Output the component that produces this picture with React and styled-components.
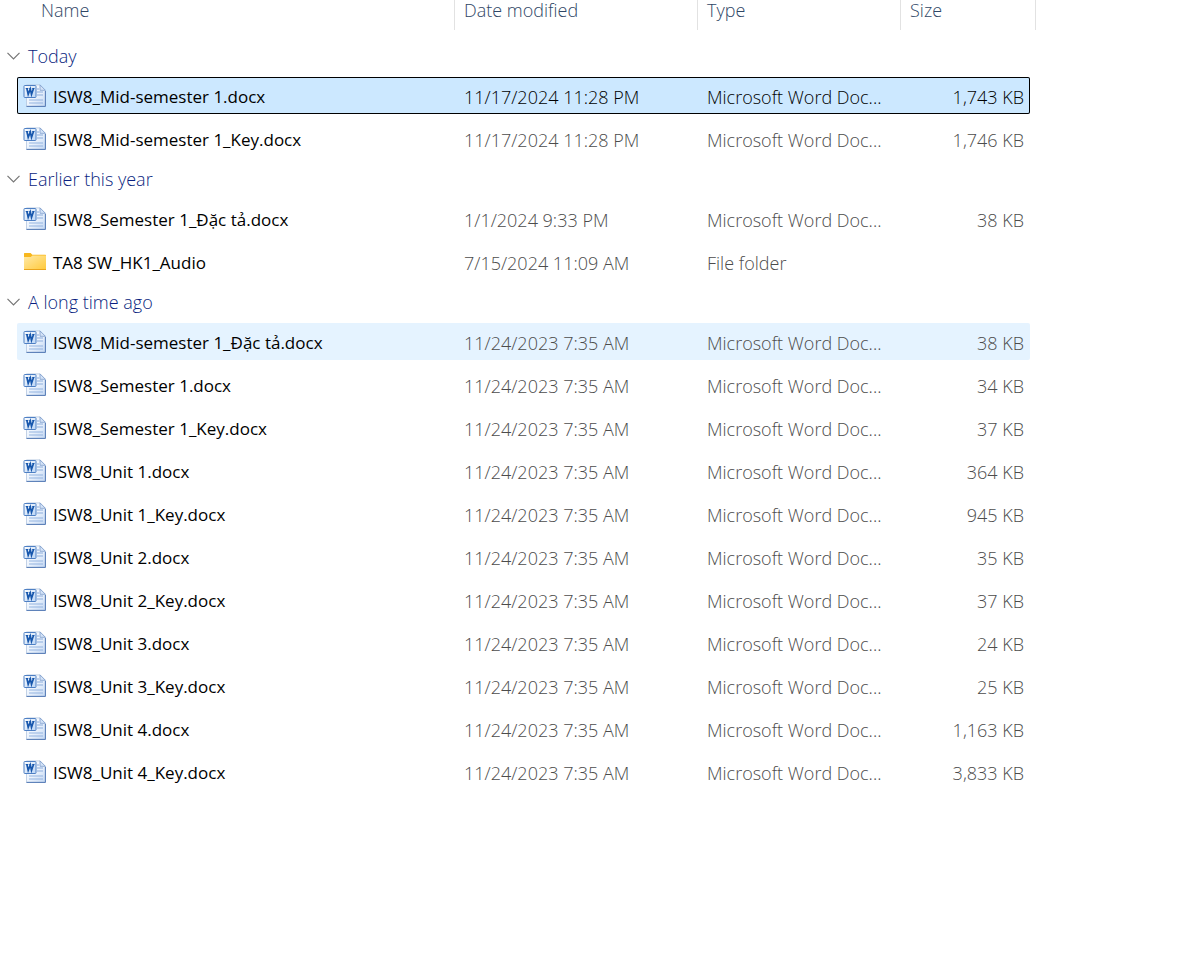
import React from "react";
import styled, { createGlobalStyle, css } from "styled-components";

const GlobalStyle = createGlobalStyle`
  * {
    box-sizing: border-box;
  }
  body {
    margin: 0;
    background: #fff;
    color: #000;
    font-family: "Open Sans", "Noto Sans", sans-serif;
    font-size: 18px;
    font-weight: 300;
    line-height: 24px;
  }
`;

const groups = [
  {
    title: "Today",
    files: [
      { name: "ISW8_Mid-semester 1.docx", date: "11/17/2024 11:28 PM", size: "1,743 KB", state: "selected" },
      { name: "ISW8_Mid-semester 1_Key.docx", date: "11/17/2024 11:28 PM", size: "1,746 KB" },
    ],
  },
  {
    title: "Earlier this year",
    files: [
      { name: "ISW8_Semester 1_Đặc tả.docx", date: "1/1/2024 9:33 PM", size: "38 KB" },
      { name: "TA8 SW_HK1_Audio", date: "7/15/2024 11:09 AM", size: "", folder: true },
    ],
  },
  {
    title: "A long time ago",
    files: [
      { name: "ISW8_Mid-semester 1_Đặc tả.docx", date: "11/24/2023 7:35 AM", size: "38 KB", state: "hovered" },
      { name: "ISW8_Semester 1.docx", date: "11/24/2023 7:35 AM", size: "34 KB" },
      { name: "ISW8_Semester 1_Key.docx", date: "11/24/2023 7:35 AM", size: "37 KB" },
      { name: "ISW8_Unit 1.docx", date: "11/24/2023 7:35 AM", size: "364 KB" },
      { name: "ISW8_Unit 1_Key.docx", date: "11/24/2023 7:35 AM", size: "945 KB" },
      { name: "ISW8_Unit 2.docx", date: "11/24/2023 7:35 AM", size: "35 KB" },
      { name: "ISW8_Unit 2_Key.docx", date: "11/24/2023 7:35 AM", size: "37 KB" },
      { name: "ISW8_Unit 3.docx", date: "11/24/2023 7:35 AM", size: "24 KB" },
      { name: "ISW8_Unit 3_Key.docx", date: "11/24/2023 7:35 AM", size: "25 KB" },
      { name: "ISW8_Unit 4.docx", date: "11/24/2023 7:35 AM", size: "1,163 KB" },
      { name: "ISW8_Unit 4_Key.docx", date: "11/24/2023 7:35 AM", size: "3,833 KB" },
    ],
  },
];

const Page = styled.main`
  padding-right: 151px;
`;

const FileTable = styled.table`
  display: block;
  thead,
  tbody {
    display: block;
  }
`;

const HeaderRow = styled.tr`
  display: grid;
  grid-template-columns: minmax(240px, 1fr) 243px 203px 135px;
  height: 30px;
  margin-bottom: 10px;
  padding-left: 17px;
`;

const HeaderCell = styled.th`
  padding: 0;
  border-right: 1px solid #e2e2e2;
`;

const SortButton = styled.button`
  display: block;
  width: 100%;
  border: 0;
  padding: 0 0 0 ${props => (props.$wide ? 24 : 9)}px;
  background: none;
  color: #2f4766;
  font: inherit;
  font-weight: 300;
  line-height: 20px;
  text-align: left;
`;

const GroupRow = styled.tr`
  display: block;
`;

const GroupCell = styled.th`
  display: block;
  padding: 0;
`;

const GroupButton = styled.button`
  display: flex;
  align-items: center;
  gap: 8px;
  height: 37px;
  border: 0;
  padding: 0 7px 5px;
  background: none;
  color: #0a1f80;
  font: inherit;
  font-weight: 300;
`;

const FileRow = styled.tr`
  display: grid;
  grid-template-columns: minmax(240px, 1fr) 243px 203px 129px;
  align-items: center;
  height: 37px;
  margin: 0 6px 6px 17px;
  border-radius: 2px;
  color: #4c4c4c;
  ${props =>
    props.$state === "hovered" &&
    css`
      background: #e5f3ff;
    `}
  ${props =>
    props.$state === "selected" &&
    css`
      background: #cce8ff;
      color: #000;
      box-shadow: inset 0 0 0 1px #000;
    `}
`;

const Cell = styled.td`
  padding: 3px 0 0 9px;
  white-space: nowrap;
`;

const NameCell = styled(Cell)`
  display: flex;
  align-items: center;
  gap: 7px;
  padding-left: 6px;
  color: #000;
  font-size: 17px;
  font-weight: 400;
  svg {
    flex: none;
    margin-bottom: 3px;
  }
`;

const SizeCell = styled(Cell)`
  padding-right: 6px;
  text-align: right;
`;

const Chevron = () => (
  <svg width="13" height="9" viewBox="0 0 13 9" fill="none" aria-hidden="true">
    <path d="M.5 .8 6.5 6.8 12.5 .8" stroke="#757575" strokeWidth="1.2" />
  </svg>
);

const WordIcon = () => (
  <svg width="23" height="23" viewBox="0 0 23 23" aria-hidden="true">
    <defs>
      <linearGradient id="paper" x1="0" y1="0" x2="1" y2="1">
        <stop offset="0" stopColor="#fff" />
        <stop offset=".5" stopColor="#edf4fd" />
        <stop offset="1" stopColor="#c3d7f3" />
      </linearGradient>
      <linearGradient id="badge" x1="0" y1="0" x2="1" y2="1">
        <stop offset="0" stopColor="#fff" />
        <stop offset="1" stopColor="#b9d4f5" />
      </linearGradient>
    </defs>
    <path d="M3.5.9H17L22.4 6.3V22.4H3.5Z" fill="url(#paper)" stroke="#b4c6e0" strokeWidth=".8" />
    <path d="M3.5 22.4H22.4V7" fill="none" stroke="#5379b5" />
    <path d="M17 .9V6.3H22.4Z" fill="#d4e3f7" stroke="#7d9dcc" strokeWidth=".8" />
    <path d="M14 5H16M14 8H20M14 11H20" stroke="#a9c2e6" strokeWidth="1.6" />
    <path d="M6 16H20M6 19H20" stroke="#94b4e0" strokeWidth="1.2" />
    <rect x="1" y="1.5" width="12" height="12" rx=".8" fill="url(#badge)" stroke="#4f80c4" />
    <path d="M2.7 4.5H5.3M6.3 4.5H8.1M9.3 4.5H11.5" stroke="#1757ad" strokeWidth="1" />
    <path d="M3.9 4.5 5.2 10.4 7.3 4.9 8.5 10.4 10.5 4.5" fill="none" stroke="#1757ad" strokeWidth="1.7" />
  </svg>
);

const FolderIcon = () => (
  <svg width="23" height="23" viewBox="0 0 23 23" aria-hidden="true">
    <defs>
      <linearGradient id="folder" x1="0" y1="0" x2="1" y2="1">
        <stop offset="0" stopColor="#ffe9a6" />
        <stop offset="1" stopColor="#ffca3c" />
      </linearGradient>
    </defs>
    <path d="M1 3.6Q1 3 1.6 3H7.6L9.3 4.8H22.4Q23 4.8 23 5.4V9H1Z" fill="#f8b71c" />
    <path d="M1 7H7.8L9.4 5.6H23V19.4H1Z" fill="url(#folder)" />
    <path d="M1 19.5H23" stroke="#eaa41c" />
  </svg>
);

const App = () => (
  <>
    <GlobalStyle />
    <Page>
      <FileTable>
        <thead>
          <HeaderRow>
            {["Name", "Date modified", "Type", "Size"].map(label => (
              <HeaderCell key={label} scope="col">
                <SortButton type="button" $wide={label === "Name"}>
                  {label}
                </SortButton>
              </HeaderCell>
            ))}
          </HeaderRow>
        </thead>
        {groups.map(group => (
          <tbody key={group.title}>
            <GroupRow>
              <GroupCell colSpan={4} scope="rowgroup">
                <GroupButton type="button" aria-expanded="true">
                  <Chevron />
                  {group.title}
                </GroupButton>
              </GroupCell>
            </GroupRow>
            {group.files.map(file => (
              <FileRow key={file.name} $state={file.state}>
                <NameCell>
                  {file.folder ? <FolderIcon /> : <WordIcon />}
                  {file.name}
                </NameCell>
                <Cell>{file.date}</Cell>
                <Cell>{file.folder ? "File folder" : "Microsoft Word Doc..."}</Cell>
                <SizeCell>{file.size}</SizeCell>
              </FileRow>
            ))}
          </tbody>
        ))}
      </FileTable>
    </Page>
  </>
);

export default App;
